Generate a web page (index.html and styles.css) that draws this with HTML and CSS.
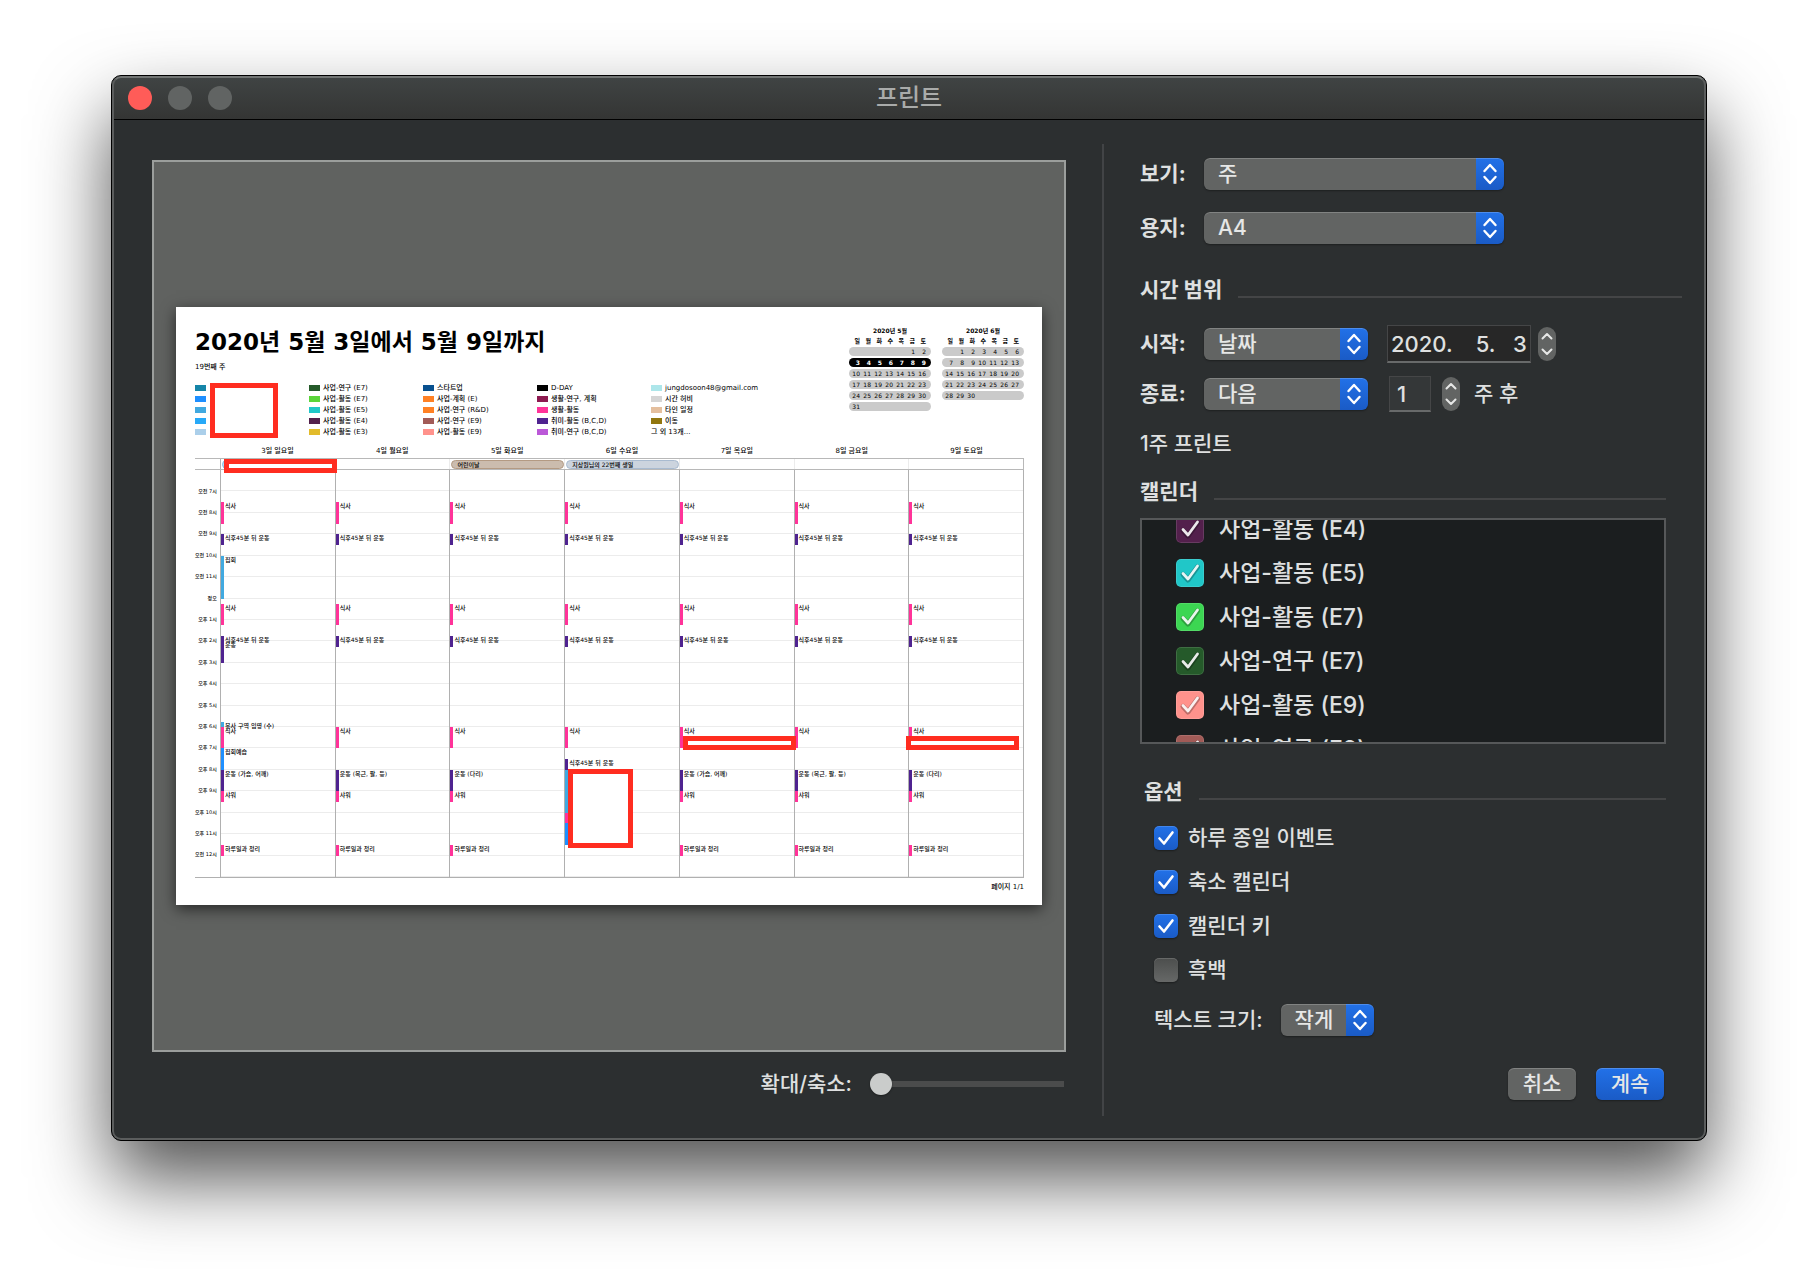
FILE: index.html
```html
<!DOCTYPE html>
<html lang="ko">
<head>
  <meta charset="UTF-8" />
  <meta name="viewport" content="width=device-width, initial-scale=1.0" />
  <title>프린트</title>
  <link rel="stylesheet" href="styles.css">
</head>
<body>
  <div class="window">
    <header class="titlebar">
      <div class="lights">
        <button class="light close" aria-label="닫기"></button>
        <button class="light" aria-label="최소화" disabled></button>
        <button class="light" aria-label="확대" disabled></button>
      </div>
      <h1>프린트</h1>
    </header>

    <main class="content">
      <section class="preview-pane">
        <div class="preview">
          <article class="paper">
            <div class="paper-head">
              <div class="paper-info">
                <h2>2020년 5월 3일에서 5월 9일까지</h2>
                <p class="week-no">19번째 주</p>
                <div class="legend">
                  <ul class="legend-hidden">
                    <li><i class="teal"></i></li>
                    <li><i class="dodger"></i></li>
                    <li><i class="sky"></i></li>
                    <li><i class="azure"></i></li>
                    <li><i class="pale"></i></li>
                    <li class="redact redact-legend"></li>
                  </ul>
                  <ul>
                    <li><i class="forest"></i>사업-연구 (E7)</li>
                    <li><i class="lime"></i>사업-활동 (E7)</li>
                    <li><i class="cyan"></i>사업-활동 (E5)</li>
                    <li><i class="plum"></i>사업-활동 (E4)</li>
                    <li><i class="gold"></i>사업-활동 (E3)</li>
                  </ul>
                  <ul>
                    <li><i class="navy"></i>스타트업</li>
                    <li><i class="orange"></i>사업-계획 (E)</li>
                    <li><i class="orange"></i>사업-연구 (R&amp;D)</li>
                    <li><i class="brick"></i>사업-연구 (E9)</li>
                    <li><i class="salmon"></i>사업-활동 (E9)</li>
                  </ul>
                  <ul>
                    <li><i class="black"></i>D-DAY</li>
                    <li><i class="wine"></i>생활-연구, 계획</li>
                    <li><i class="pink"></i>생활-활동</li>
                    <li><i class="purple"></i>취미-활동 (B,C,D)</li>
                    <li><i class="violet"></i>취미-연구 (B,C,D)</li>
                  </ul>
                  <ul>
                    <li><i class="aqua"></i>jungdosoon48@gmail.com</li>
                    <li><i class="grey"></i>시간 허비</li>
                    <li><i class="tan"></i>타인 일정</li>
                    <li><i class="olive"></i>이동</li>
                    <li>그 외 13개...</li>
                  </ul>
                </div>
              </div>
              <div class="minis" id="minis"></div>
            </div>

            <div class="week">
              <div class="day-names">
                <span>3일 일요일</span>
                <span>4일 월요일</span>
                <span>5일 화요일</span>
                <span>6일 수요일</span>
                <span>7일 목요일</span>
                <span>8일 금요일</span>
                <span>9일 토요일</span>
              </div>
              <div class="all-day">
                <div><span class="pill pill-sky"></span><span class="redact redact-allday"></span></div>
                <div></div>
                <div><span class="pill pill-tan">어린이날</span></div>
                <div><span class="pill pill-blue">지상원님의 22번째 생일</span></div>
                <div></div>
                <div></div>
                <div></div>
              </div>
              <div class="schedule">
                <div class="hours" id="hours"></div>
                <div class="hour-lines" id="hourLines"></div>
                <div class="days" id="days"></div>
              </div>
            </div>
            <p class="page-no">페이지 1/1</p>
          </article>
        </div>
        <div class="zoom-row">
          <label for="zoom">확대/축소:</label>
          <input type="range" id="zoom" min="0" max="100" value="0">
        </div>
      </section>

      <form class="settings" onsubmit="return false">
        <div class="field">
          <label for="view">보기:</label>
          <select id="view" class="wide"><option>주</option></select>
        </div>
        <div class="field">
          <label for="paper">용지:</label>
          <select id="paper" class="wide"><option>A4</option></select>
        </div>

        <h3 class="range-title">시간 범위</h3>
        <div class="field">
          <label for="start">시작:</label>
          <select id="start" class="mid"><option>날짜</option></select>
          <input type="text" id="startDate" class="date" aria-label="시작 날짜" value="2020.    5.   3">
          <span class="stepper">
            <button aria-label="날짜 올리기"><svg viewBox="0 0 18 17"><path d="M4.5 11.5 9 7l4.5 4.5"/></svg></button>
            <button aria-label="날짜 내리기"><svg viewBox="0 0 18 17"><path d="M4.5 5.5 9 10l4.5-4.5"/></svg></button>
          </span>
        </div>
        <div class="field field-end">
          <label for="end">종료:</label>
          <select id="end" class="mid"><option>다음</option></select>
          <input type="text" id="count" class="count" value="1">
          <span class="stepper">
            <button aria-label="주 올리기"><svg viewBox="0 0 18 17"><path d="M4.5 11.5 9 7l4.5 4.5"/></svg></button>
            <button aria-label="주 내리기"><svg viewBox="0 0 18 17"><path d="M4.5 5.5 9 10l4.5-4.5"/></svg></button>
          </span>
          <label for="count" class="after">주 후</label>
        </div>
        <p class="summary">1주 프린트</p>

        <h3>캘린더</h3>
        <div class="calendar-list">
          <ul>
            <li><label><input type="checkbox" class="plum" checked>사업-활동 (E4)</label></li>
            <li><label><input type="checkbox" class="cyan" checked>사업-활동 (E5)</label></li>
            <li><label><input type="checkbox" class="green" checked>사업-활동 (E7)</label></li>
            <li><label><input type="checkbox" class="forest" checked>사업-연구 (E7)</label></li>
            <li><label><input type="checkbox" class="salmon" checked>사업-활동 (E9)</label></li>
            <li><label><input type="checkbox" class="brick" checked>사업-연구 (E9)</label></li>
          </ul>
        </div>

        <h3 class="options-title">옵션</h3>
        <div class="options">
          <label><input type="checkbox" checked>하루 종일 이벤트</label>
          <label><input type="checkbox" checked>축소 캘린더</label>
          <label><input type="checkbox" checked>캘린더 키</label>
          <label><input type="checkbox">흑백</label>
        </div>
        <div class="text-size">
          <label for="textSize">텍스트 크기:</label>
          <select id="textSize"><option>작게</option></select>
        </div>

        <div class="actions">
          <button class="btn">취소</button>
          <button class="btn primary">계속</button>
        </div>
      </form>
    </main>
  </div>
  <script src="script.js"></script>
</body>
</html>
```
FILE: styles.css
```css
* {
  box-sizing: border-box;
}

body {
  margin: 0;
  padding: 75px 111px 147px;
  background: #fff;
  font-family: Inter, 'Noto Sans CJK KR', sans-serif;
  font-size: 21px;
  font-weight: 500;
  line-height: 32px;
  color: #dfe0e0;
}

h1, h2, h3, p, ul {
  margin: 0;
  padding: 0;
}

ul {
  list-style: none;
}

button, input, select {
  font: inherit;
  color: inherit;
  margin: 0;
  padding: 0;
  border: none;
}

.window {
  position: relative;
  background: #2c2f30;
  border: 1px solid #000;
  border-radius: 10px;
  overflow: hidden;
  box-shadow: 0 38px 76px rgba(0, 0, 0, 0.68);
}

/* light rim just inside the window edge */
.window::after {
  content: '';
  position: absolute;
  inset: 0;
  border: 2px solid #5b5d5d;
  border-top-color: #727574;
  border-radius: 9px;
  pointer-events: none;
}

.titlebar {
  display: grid;
  grid-template-columns: 1fr auto 1fr;
  align-items: center;
  height: 44px;
  padding: 0 16px;
  background: linear-gradient(#404444, #343534);
  border-bottom: 1px solid #000;
}

.titlebar h1 {
  font-size: 24px;
  font-weight: 500;
  color: #a9abaa;
}

.lights {
  display: flex;
  gap: 16px;
}

.light {
  width: 24px;
  height: 24px;
  border-radius: 50%;
  background: #616463;
}

.light.close {
  background: #ff5c58;
}

.content {
  display: flex;
  padding: 24px 24px 24px 40px;
}

/* left side */
.preview-pane {
  flex: 1;
  display: flex;
  flex-direction: column;
  min-width: 0;
  margin-right: 36px;
  padding-top: 16px;
}

.preview {
  flex: 1;
  display: flex;
  align-items: center;
  padding: 0 22px;
  background: #606260;
  border: 2px solid #9b9e9c;
}

.zoom-row {
  display: flex;
  justify-content: flex-end;
  align-items: center;
  gap: 18px;
  height: 64px;
  padding-right: 2px;
}

#zoom {
  appearance: none;
  width: 194px;
  height: 22px;
  background: linear-gradient(#4b4c4c, #4b4c4c) center / 100% 6px no-repeat;
  border-radius: 3px;
}

#zoom::-webkit-slider-thumb {
  appearance: none;
  width: 22px;
  height: 22px;
  border-radius: 50%;
  background: #cacccb;
  box-shadow: 0 1px 2px rgba(0, 0, 0, 0.4);
}

/* the printed page */
.paper {
  width: 100%;
  padding: 20px 18px 13px 19px;
  background: #fff;
  color: #000;
  font-family: 'DejaVu Sans', 'Noto Sans CJK KR', sans-serif;
  font-size: 7px;
  line-height: 10px;
  box-shadow: 0 4px 14px rgba(0, 0, 0, 0.6);
}

.paper-head {
  display: flex;
  justify-content: space-between;
}

.paper h2 {
  font-size: 23px;
  line-height: 30px;
}

.week-no {
  margin-top: 5px;
}

.legend {
  display: flex;
  margin-top: 10px;
}

.legend ul {
  width: 114px;
}

.legend li {
  display: flex;
  align-items: center;
  height: 11px;
  white-space: nowrap;
}

.legend i {
  width: 11px;
  height: 6px;
  margin-right: 3px;
}

.legend-hidden {
  position: relative;
}

.minis {
  display: flex;
  align-items: flex-start;
  gap: 11px;
}

.minis table {
  width: 82px;
  table-layout: fixed;
  border-spacing: 0 2px;
  font-size: 6px;
  line-height: 8px;
}

.minis caption {
  font-weight: bold;
}

.minis th {
  width: 11px;
  height: 8px;
  padding: 0;
  text-align: right;
}

.minis td {
  height: 9px;
  padding: 0;
  line-height: 9px;
  text-align: right;
  background: #cacaca;
}

.minis td:first-child {
  border-radius: 5px 0 0 5px;
}

.minis th:last-child {
  width: 16px;
  padding-right: 5px;
}

.minis td:last-child {
  padding-right: 5px;
  border-radius: 0 5px 5px 0;
}

.minis .current td {
  background: #000;
  color: #fff;
  font-weight: bold;
}

.week {
  margin-top: 7px;
}

.day-names, .all-day {
  display: grid;
  grid-template-columns: repeat(7, 1fr);
  padding-left: 25px;
}

.day-names {
  line-height: 14px;
  text-align: center;
}

.all-day {
  height: 12px;
  border: solid #b8b8b8;
  border-width: 1px 1px 1px 0;
}

.all-day > div {
  position: relative;
  display: flex;
  padding: 1px 0 0 1px;
  border-left: 1px solid #ececec;
}

.all-day > div:first-child {
  border-left-color: #b0b0b0;
}

.pill {
  flex: 1;
  height: 9px;
  padding-left: 5px;
  border: 1px solid;
  border-radius: 5px;
  font-size: 6px;
  line-height: 7px;
  white-space: nowrap;
}

.pill-sky {
  background: #b5def5;
  border-color: #7fbfe6;
}

.pill-tan {
  background: #cbbcae;
  border-color: #b39a83;
}

.pill-blue {
  background: #ccd4de;
  border-color: #a9bbd0;
}

.schedule {
  display: grid;
  grid-template-columns: 25px 1fr;
  height: 408px;
  border-bottom: 1px solid #b0b0b0;
}

.hours {
  display: grid;
  grid-auto-rows: 1fr;
  align-items: center;
  padding: 10px 7px 12px 0;
  font-size: 5px;
  white-space: nowrap;
}

.hours span {
  display: flex;
  justify-content: flex-end;
}

.hour-lines {
  grid-area: 1 / 2;
  display: grid;
  grid-auto-rows: 1fr;
}

.hour-lines div {
  border-bottom: 1px solid #ececec;
}

.days {
  grid-area: 1 / 2;
  display: grid;
  grid-template-columns: repeat(7, 1fr);
  border-right: 1px solid #b0b0b0;
}

.day {
  position: relative;
  border-left: 1px solid #b0b0b0;
}

/* top and height come from the event's time */
.event {
  position: absolute;
  left: 0;
  right: 0;
  padding-left: 1px;
  border-left: 3px solid;
  font-size: 6px;
  line-height: 7px;
  white-space: nowrap;
}

.ev-pink { border-color: #ff3399; }
.ev-purple { border-color: #4f2390; }
.ev-sky { border-color: #41a9e0; }
.ev-dodger { border-color: #1e8fff; }

.page-no {
  margin-top: 4px;
  text-align: right;
}

/* red frames that cover private entries */
.redact {
  position: absolute;
  background: #fff;
  border: 5px solid #ff2d20;
}

.legend .redact-legend {
  top: 1px;
  left: 15px;
  width: 68px;
  height: 55px;
}

.redact-allday {
  top: 0;
  left: 3px;
  width: 113px;
  height: 14px;
  z-index: 1;
}

.redact-row {
  left: 3px;
  width: 113px;
  height: 14px;
  z-index: 1;
}

.redact-last {
  left: -3px;
}

.redact-block {
  left: 3px;
  width: 65px;
  height: 79px;
}

/* calendar colours */
.teal { background-color: #1585a8; }
.dodger { background-color: #1e8fff; }
.sky { background-color: #41a9e0; }
.azure { background-color: #27a9f8; }
.pale { background-color: #abcfea; }
.forest { background-color: #255a2a; }
.lime { background-color: #5ad53a; }
.green { background-color: #3cd652; }
.cyan { background-color: #20c7c8; }
.plum { background-color: #53204c; }
.gold { background-color: #e2bb2b; }
.navy { background-color: #08508f; }
.orange { background-color: #ff8124; }
.brick { background-color: #a25b57; }
.salmon { background-color: #ff928c; }
.black { background-color: #000; }
.wine { background-color: #8d1a50; }
.pink { background-color: #ff3399; }
.purple { background-color: #4f2390; }
.violet { background-color: #bb58d8; }
.aqua { background-color: #ade6ea; }
.grey { background-color: #d5d5d5; }
.tan { background-color: #e4bf9e; }
.olive { background-color: #91760f; }

/* right side */
.settings {
  width: 580px;
  display: flex;
  flex-direction: column;
  padding: 14px 0 16px 36px;
  border-left: 2px solid #424446;
}

.field {
  display: flex;
  align-items: center;
  height: 32px;
  margin-bottom: 22px;
}

.field label {
  width: 64px;
  font-weight: bold;
}

.field label.after {
  width: auto;
  margin-left: 14px;
  font-weight: 500;
}

select {
  appearance: none;
  height: 32px;
  padding: 0 40px 0 14px;
  border-radius: 6px;
  color: #e6e7e6;
  background:
    url("data:image/svg+xml,%3Csvg xmlns='http://www.w3.org/2000/svg' width='28' height='32' fill='none' stroke='white' stroke-width='2.4' stroke-linecap='round' stroke-linejoin='round'%3E%3Cpath d='M8.5 13 14 7l5.5 6M8.5 19l5.5 6 5.5-6'/%3E%3C/svg%3E") right / 28px 32px no-repeat,
    linear-gradient(#2271e8, #1a5bc6) right / 28px 100% no-repeat,
    #626463;
  box-shadow: inset 0 1px 0 rgba(255, 255, 255, 0.2), 0 1px 2px rgba(0, 0, 0, 0.35);
}

.wide {
  width: 300px;
}

.mid {
  width: 164px;
}

h3 {
  display: flex;
  gap: 16px;
  margin-right: 16px;
  font-size: 21px;
  line-height: 32px;
  white-space: nowrap;
}

h3::after {
  content: '';
  flex: 1;
  height: 2px;
  margin-top: 22px;
  background: #444546;
}

.range-title {
  margin: 8px 0 22px;
}

.date, .count {
  background: #272727;
  border: 1px solid #454647;
  border-bottom: 2px solid #686a6a;
  font-size: 22px;
}

.date {
  width: 144px;
  height: 38px;
  margin: 0 7px 0 19px;
  padding-left: 3px;
}

.count {
  width: 42px;
  height: 36px;
  margin: 0 11px 0 21px;
  padding-left: 7px;
  background: #343738;
}

.stepper {
  display: flex;
  flex-direction: column;
  width: 18px;
  height: 34px;
  border-radius: 9px;
  background: #626463;
  overflow: hidden;
}

.stepper button {
  display: flex;
  height: 17px;
  background: none;
}

.stepper svg {
  width: 18px;
  height: 17px;
  fill: none;
  stroke: #e6e7e6;
  stroke-width: 2;
  stroke-linecap: round;
  stroke-linejoin: round;
}

.field-end {
  margin-top: -4px;
  margin-bottom: 18px;
}

.summary {
  margin-bottom: 16px;
}

.calendar-list {
  height: 226px;
  margin: 10px 16px 32px 0;
  background: #1b1e1f;
  border: 2px solid #565859;
  overflow: hidden;
}

/* scrolled part of the way down */
.calendar-list ul {
  margin-top: -13px;
  padding-left: 34px;
  font-size: 23px;
}

.calendar-list label, .options label {
  display: flex;
  align-items: center;
  height: 44px;
}

input[type="checkbox"] {
  appearance: none;
  width: 24px;
  height: 24px;
  margin-right: 10px;
  border-radius: 5px;
  background-image: linear-gradient(#4c4e4d, #666867);
  box-shadow: inset 0 1px 0 rgba(255, 255, 255, 0.15), 0 1px 2px rgba(0, 0, 0, 0.4);
}

input[type="checkbox"]:checked {
  background-image:
    url("data:image/svg+xml,%3Csvg xmlns='http://www.w3.org/2000/svg' viewBox='0 0 24 24' fill='none' stroke='white' stroke-width='2.6' stroke-linecap='round' stroke-linejoin='round'%3E%3Cpath d='M5.5 12.5 10 17.5 18.5 6.5'/%3E%3C/svg%3E"),
    linear-gradient(#2271e8, #1a5bc6);
}

.calendar-list input[type="checkbox"] {
  width: 28px;
  height: 28px;
  margin-right: 15px;
  background-image: url("data:image/svg+xml,%3Csvg xmlns='http://www.w3.org/2000/svg' viewBox='0 0 28 28' fill='none' stroke-linecap='round' stroke-linejoin='round'%3E%3Cpath stroke='black' stroke-opacity='.25' stroke-width='5' d='M7 15.500 12 21 21.500 8'/%3E%3Cpath stroke='white' stroke-opacity='.9' stroke-width='2.8' d='M7 14.500 12 20 21.500 7'/%3E%3C/svg%3E");
  box-shadow: inset 0 0 0 1px rgba(255, 255, 255, 0.12);
}

.options-title {
  padding-left: 4px;
}

.options {
  margin: 8px 0 12px 14px;
}

.text-size {
  display: flex;
  align-items: center;
  gap: 18px;
  margin-left: 14px;
}

.actions {
  display: flex;
  justify-content: flex-end;
  gap: 20px;
  margin: 32px 18px 0 0;
}

.btn {
  width: 68px;
  height: 32px;
  line-height: 30px;
  border-radius: 6px;
  color: #e6e7e6;
  background: #626463;
  box-shadow: inset 0 1px 0 rgba(255, 255, 255, 0.2), 0 1px 2px rgba(0, 0, 0, 0.35);
}

.btn.primary {
  background: linear-gradient(#2271e8, #1a5bc6);
}
```
FILE: script.js
```javascript
const FIRST_HOUR = 6;
const HOURS = 19;

// [start, end, colour, title]
const morning = [
  [7.5, 8.5, 'pink', '식사'],
  [9, 9.5, 'purple', '식후45분 뒤 운동'],
  [12.25, 13.25, 'pink', '식사'],
  [13.75, 14.25, 'purple', '식후45분 뒤 운동'],
  [18, 19, 'pink', '식사']
];

function evening(workout) {
  return [
    [20, 21, 'purple', '운동 (' + workout + ')'],
    [21, 21.5, 'pink', '샤워'],
    [23.5, 24, 'pink', '하루일과 정리']
  ];
}

const week = [
  [...morning, [10, 12, 'sky', '집회'], [14, 15, 'purple', '운동'],
    [17.75, 18, 'sky', '봉사 구역 임명 (수)'], [19, 20, 'dodger', '집회예습'], ...evening('가슴, 어깨')],
  [...morning, ...evening('복근, 팔, 등')],
  [...morning, ...evening('다리')],
  [...morning, [19.5, 20, 'purple', '식후45분 뒤 운동'], [20, 22, 'sky', ''],
    [22, 22.5, 'pink', ''], [22.5, 23.5, 'dodger', '']],
  [...morning, ...evening('가슴, 어깨')],
  [...morning, ...evening('복근, 팔, 등')],
  [...morning, ...evening('다리')]
];

// day index -> covered slots
const covered = {
  3: [[19.98, 'redact-block']],
  4: [[18.44, 'redact-row']],
  6: [[18.44, 'redact-row redact-last']]
};

function percent(hours) {
  return (hours / HOURS * 100).toFixed(2) + '%';
}

function hourName(h) {
  if (h === 12) return '정오';
  if (h === 24) return '오전 12시';
  return h < 12 ? `오전 ${h}시` : `오후 ${h - 12}시`;
}

let labels = '';
for (let h = FIRST_HOUR + 1; h < FIRST_HOUR + HOURS; h++) {
  labels += `<span>${hourName(h)}</span>`;
}
document.getElementById('hours').innerHTML = labels;
document.getElementById('hourLines').innerHTML = '<div></div>'.repeat(HOURS);

document.getElementById('days').innerHTML = week.map((events, i) => {
  const items = events.map(([start, end, color, title]) =>
    `<div class="event ev-${color}" style="top:${percent(start - FIRST_HOUR)};height:${percent(end - start)}">${title}</div>`);
  const boxes = (covered[i] || []).map(([start, cls]) =>
    `<div class="redact ${cls}" style="top:${percent(start - FIRST_HOUR)}"></div>`);
  return `<div class="day">${items.join('')}${boxes.join('')}</div>`;
}).join('');

function miniCalendar(title, offset, days, currentRow) {
  const rows = Math.ceil((offset + days) / 7);
  let html = `<table><caption>${title}</caption><tr>`;
  html += [...'일월화수목금토'].map(d => `<th>${d}</th>`).join('') + '</tr>';
  for (let r = 0; r < rows; r++) {
    html += `<tr class="${r === currentRow ? 'current' : ''}">`;
    for (let c = 0; c < 7; c++) {
      const n = r * 7 + c - offset + 1;
      html += `<td>${n > 0 && n <= days ? n : ''}</td>`;
    }
    html += '</tr>';
  }
  return html + '</table>';
}

document.getElementById('minis').innerHTML =
  miniCalendar('2020년 5월', 5, 31, 1) + miniCalendar('2020년 6월', 1, 30, -1);
```
